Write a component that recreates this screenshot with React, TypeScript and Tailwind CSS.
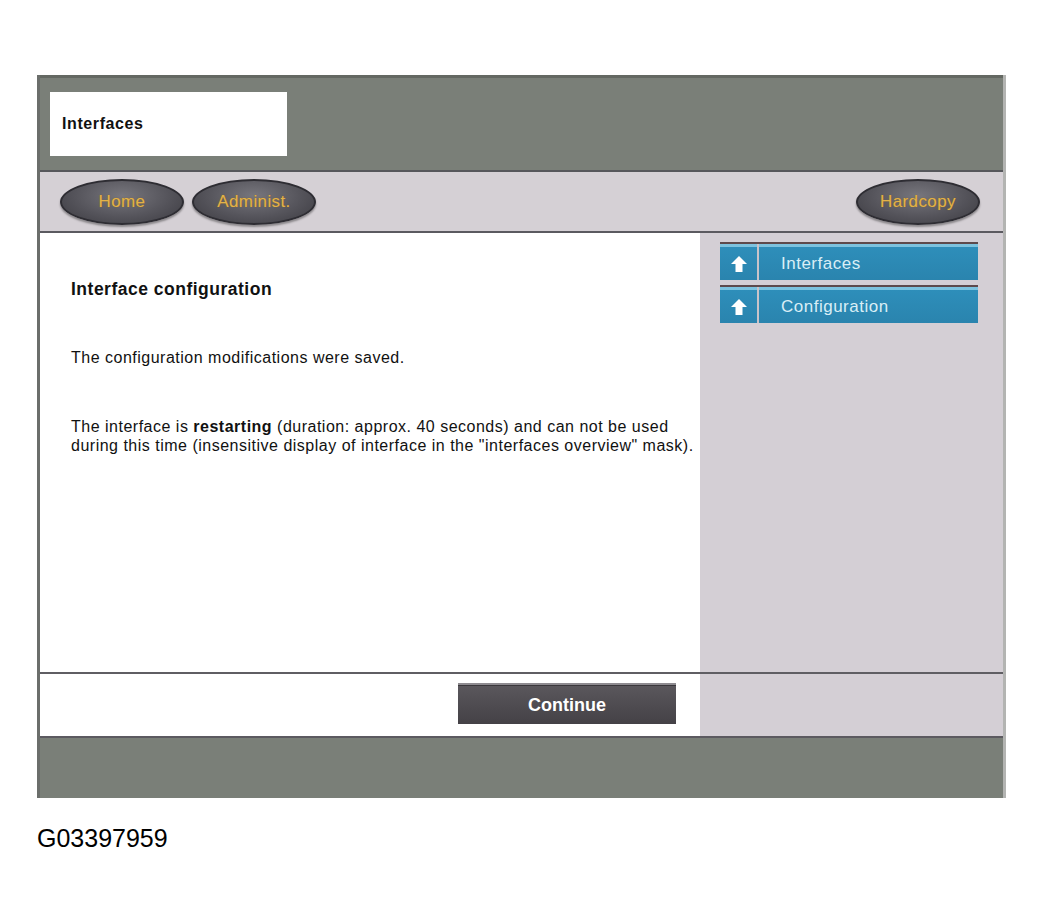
import React from 'react';

const font = { fontFamily: '"Liberation Sans", Arial, sans-serif' };

function OvalButton({ label }: { label: string }) {
  return (
    <button className="flex h-[46px] w-[124px] items-center justify-center rounded-[50%] border-2 border-[#2e2d33] bg-[radial-gradient(ellipse_at_50%_35%,#77767d_0%,#55545b_55%,#3b3a40_100%)] shadow-[0_2px_2px_rgba(0,0,0,0.35)]">
      <span className="text-[17px] tracking-[0.4px] text-[#e2b24a] [text-shadow:0_0_1px_#8a6a20]">{label}</span>
    </button>
  );
}

function UpArrow() {
  return (
    <svg width="18" height="18" viewBox="0 0 18 18">
      <polygon points="9,1 17,9 12.5,9 12.5,17 5.5,17 5.5,9 1,9" fill="#ffffff" />
    </svg>
  );
}

function NavItem({ label }: { label: string }) {
  return (
    <div className="flex h-[38px] border-t-2 border-[#5d4a4c] bg-[linear-gradient(#2e8fbb,#2a84ae)]">
      <div className="flex w-[39px] flex-col border-r-2 border-[#c9c3c9]">
        <div className="h-[3px] bg-[#7cc3df]" />
        <div className="flex flex-1 items-center justify-center">
          <UpArrow />
        </div>
      </div>
      <div className="flex flex-1 flex-col">
        <div className="h-[3px] bg-[#7cc3df]" />
        <div className="flex flex-1 items-center pl-[22px] text-[17px] tracking-[0.5px] text-[#d9eef6]">{label}</div>
      </div>
    </div>
  );
}

export default function App() {
  return (
    <div className="h-[920px] w-[1045px] bg-white pl-[37px] pt-[75px]" style={font}>
      <div className="flex w-[969px] flex-col border-l-[3px] border-r-[3px] border-l-[#6b6e6b] border-r-[#b3b4b2]">
        {/* title band */}
        <div className="h-[95px] border-t-[3px] border-[#646862] bg-[#7a7f78] pl-[10px] pt-[14px]">
          <div className="flex h-[64px] w-[237px] items-center bg-white pl-[12px] text-[16px] font-bold tracking-[0.6px] text-[#111]">
            Interfaces
          </div>
        </div>
        <div className="h-[2px] bg-[#56575b]" />

        {/* nav band */}
        <div className="flex h-[59px] items-center bg-[#d5d0d5] pl-[20px] pr-[23px]">
          <div className="flex gap-[8px]">
            <OvalButton label="Home" />
            <OvalButton label="Administ." />
          </div>
          <div className="ml-auto">
            <OvalButton label="Hardcopy" />
          </div>
        </div>
        <div className="h-[2px] bg-[#5b5a60]" />

        {/* main area */}
        <div className="flex h-[503px]">
          <div className="flex w-[660px] flex-col bg-white">
            <div className="h-[439px] pl-[31px] pt-[46px] text-[#111]">
              <h1 className="text-[17.5px] font-bold leading-[20px] tracking-[0.5px]">Interface configuration</h1>
              <p className="mt-[49px] text-[16px] leading-[19px] tracking-[0.5px]">The configuration modifications were saved.</p>
              <p className="mt-[50px] text-[16px] leading-[19px] tracking-[0.5px]">
                The interface is <b>restarting</b> (duration: approx. 40 seconds) and can not be used
                <br />
                during this time (insensitive display of interface in the "interfaces overview" mask).
              </p>
            </div>
            <div className="h-[2px] bg-[#5f5e63]" />
            <div className="flex flex-1 items-start justify-end pr-[24px] pt-[9px]">
              <button className="flex h-[41px] w-[218px] flex-col bg-[#4c494e]">
                <div className="h-[3px] border-b border-[#3a383c] bg-[#8e8b90]" />
                <div className="flex flex-1 items-center justify-center bg-[linear-gradient(#5a575c,#444146)] text-[18px] font-bold text-white">
                  Continue
                </div>
              </button>
            </div>
          </div>

          <div className="flex flex-1 flex-col bg-[#d4cfd5]">
            <div className="flex h-[439px] flex-col gap-[5px] pl-[20px] pr-[25px] pt-[9px]">
              <NavItem label="Interfaces" />
              <NavItem label="Configuration" />
            </div>
            <div className="h-[2px] bg-[#5f5e63]" />
          </div>
        </div>
        <div className="h-[2px] bg-[#5c5a60]" />

        {/* bottom band */}
        <div className="h-[60px] bg-[#7a7f78]" />
      </div>

      <div className="mt-[22px] text-[25px] text-black">G03397959</div>
    </div>
  );
}
